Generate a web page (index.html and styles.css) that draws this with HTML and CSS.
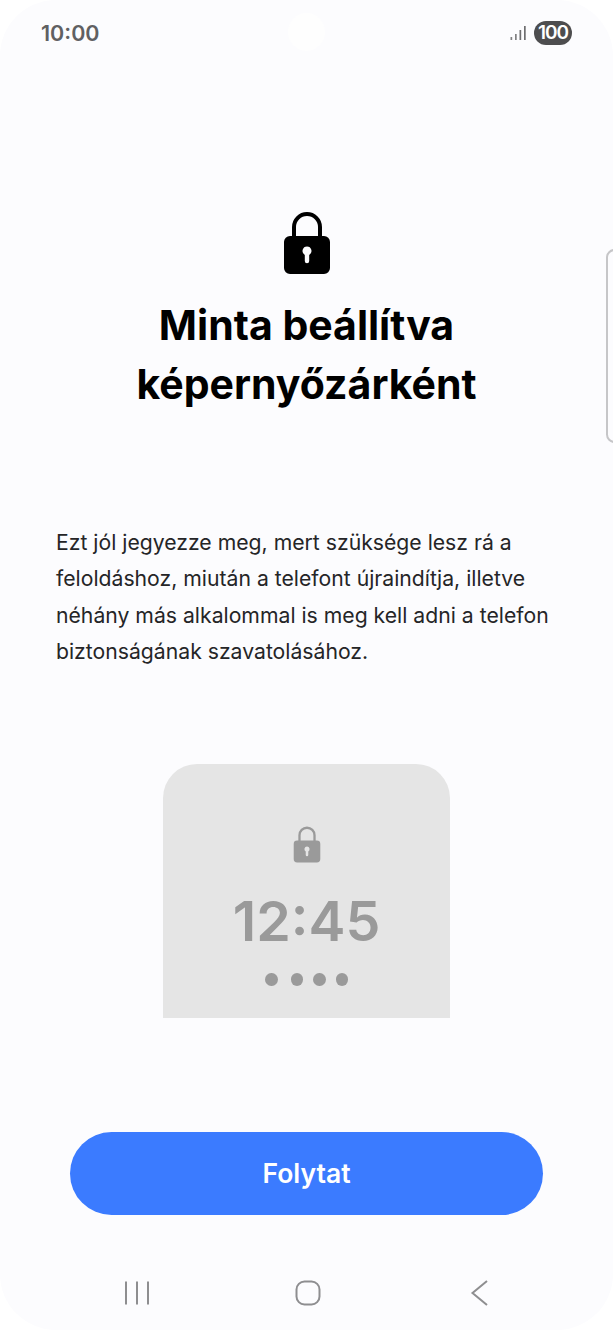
FILE: index.html
```html
<!DOCTYPE html>
<html lang="hu">
<head>
    <meta charset="UTF-8">
    <meta name="viewport" content="width=device-width, initial-scale=1.0">
    <title>Minta beállítva</title>
    <link rel="stylesheet" href="styles.css">
</head>
<body>
    <div class="screen">
        <div class="status-bar">
            <span class="clock">10:00</span>
            <div class="camera"></div>
            <div class="status-icons">
                <svg class="signal" width="17" height="16" viewBox="0 0 17 16">
                    <rect x="0.5" y="12" width="1.7" height="3" fill="#808082"/>
                    <rect x="5" y="9" width="1.7" height="6" fill="#808082"/>
                    <rect x="9.5" y="5" width="1.7" height="10" fill="#6e6e70"/>
                    <rect x="14" y="1" width="1.7" height="14" fill="#6e6e70"/>
                </svg>
                <span class="battery">100</span>
            </div>
        </div>

        <div class="edge-handle"></div>

        <div class="intro">
            <svg class="lock" width="48" height="64" viewBox="0 0 48 64">
                <path d="M11 30V16a13 13 0 0 1 26 0v14" fill="none" stroke="#000" stroke-width="4"/>
                <path fill-rule="evenodd" fill="#000" d="M7 25h34a6 6 0 0 1 6 6v26a6 6 0 0 1-6 6H7a6 6 0 0 1-6-6V31a6 6 0 0 1 6-6zM24 35.500a4.500 4.500 0 0 0-2.200 8.400V50a2.200 2.200 0 0 0 4.400 0v-6.100A4.500 4.500 0 0 0 24 35.500z"/>
            </svg>
            <h1>Minta beállítva<br>képernyőzárként</h1>
        </div>

        <p class="description">Ezt jól jegyezze meg, mert szüksége lesz rá a feloldáshoz, miután a telefont újraindítja, illetve néhány más alkalommal is meg kell adni a telefon biztonságának szavatolásához.</p>

        <div class="preview">
            <svg class="preview-lock" width="28" height="37" viewBox="0 0 48 64">
                <path d="M11 30V16a13 13 0 0 1 26 0v14" fill="none" stroke="#9a9a9a" stroke-width="4"/>
                <path fill-rule="evenodd" fill="#9a9a9a" d="M7 25h34a6 6 0 0 1 6 6v26a6 6 0 0 1-6 6H7a6 6 0 0 1-6-6V31a6 6 0 0 1 6-6zM24 35.500a4.500 4.500 0 0 0-2.200 8.400V50a2.200 2.200 0 0 0 4.400 0v-6.100A4.500 4.500 0 0 0 24 35.500z"/>
            </svg>
            <div class="preview-time">12:45</div>
            <div class="preview-dots">
                <span></span><span></span><span></span><span></span>
            </div>
        </div>

        <div class="actions">
            <button class="continue-btn">Folytat</button>
        </div>

        <div class="nav-bar">
            <svg width="26" height="26" viewBox="0 0 26 26">
                <path d="M2 1.500v23M13 1.500v23M24 1.500v23" stroke="#8e8e90" stroke-width="2" fill="none"/>
            </svg>
            <svg width="26" height="26" viewBox="0 0 26 26">
                <rect x="1.500" y="1.500" width="23" height="23" rx="8" stroke="#8e8e90" stroke-width="2" fill="none"/>
            </svg>
            <svg width="18" height="26" viewBox="0 0 18 26">
                <path d="M17 1L2.500 13 17 25" stroke="#8e8e90" stroke-width="2" fill="none"/>
            </svg>
        </div>
    </div>
</body>
</html>
```

FILE: styles.css
```css
* {
    box-sizing: border-box;
}
html, body {
    margin: 0;
    height: 100%;
    background: #fff;
}
body {
    font-family: Inter, "Noto Sans", sans-serif;
    overflow: hidden;
}
.screen {
    position: relative;
    height: 1330px;
    background: #fcfcfe;
    border-radius: 56px;
    display: flex;
    flex-direction: column;
}
.status-bar {
    height: 66px;
    padding: 0 41px;
    display: flex;
    align-items: center;
    justify-content: space-between;
}
.clock {
    font-size: 21.500px;
    font-weight: 600;
    color: #606062;
}
.camera {
    position: absolute;
    left: 288px;
    top: 13px;
    width: 37px;
    height: 38px;
    border-radius: 50%;
    background: #fefefe;
}
.status-icons {
    display: flex;
    align-items: center;
    gap: 7px;
}
.battery {
    width: 38px;
    height: 24px;
    border-radius: 12px;
    background: #4d4d4f;
    color: #fff;
    font-size: 19px;
    font-weight: 600;
    letter-spacing: -1px;
    line-height: 24px;
    text-align: center;
}
.edge-handle {
    position: absolute;
    right: -10px;
    top: 249px;
    width: 17px;
    height: 194px;
    border: 2px solid #c6c6c8;
    border-radius: 10px;
    background: #fcfcfe;
}
.intro {
    padding-top: 145px;
    display: flex;
    flex-direction: column;
    align-items: center;
}
.lock {
    display: block;
}
h1 {
    margin: 21px 0 0;
    font-size: 41px;
    line-height: 59px;
    font-weight: 700;
    color: #000;
    text-align: center;
}
.description {
    margin: 110px 0 0;
    padding: 0 56px;
    font-size: 21.200px;
    line-height: 36.400px;
    color: #252527;
}
.preview {
    width: 287px;
    height: 254px;
    margin: 94px auto 0;
    padding-top: 62px;
    background: #e5e5e5;
    border-radius: 34px 34px 0 0;
    display: flex;
    flex-direction: column;
    align-items: center;
}
.preview-time {
    margin-top: 25px;
    font-size: 55.500px;
    line-height: 66px;
    font-weight: 600;
    color: #9a9a9a;
}
.preview-dots {
    display: flex;
    gap: 10px;
    margin-top: 19px;
}
.preview-dots span {
    width: 12.500px;
    height: 13px;
    border-radius: 50%;
    background: #9a9a9a;
}
.preview-dots span:first-child {
    margin-right: 3px;
}
.actions {
    padding: 114px 70px 0;
}
.continue-btn {
    display: block;
    width: 100%;
    height: 83px;
    border: none;
    border-radius: 42px;
    background: #3b7bff;
    color: #fff;
    font-family: inherit;
    font-size: 26.500px;
    font-weight: 600;
}
.nav-bar {
    margin-top: 65px;
    padding: 0 48px 0 51px;
    display: grid;
    grid-template-columns: repeat(3, 1fr);
    justify-items: center;
}
```
